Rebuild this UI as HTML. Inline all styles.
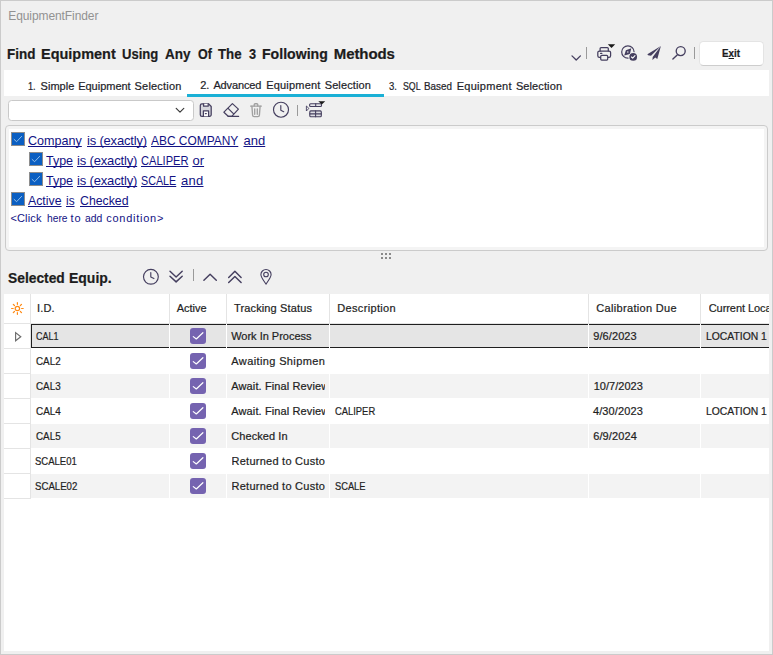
<!DOCTYPE html>
<html><head><meta charset="utf-8"><title>EquipmentFinder</title>
<style>
*{box-sizing:border-box;margin:0;padding:0}
html,body{width:773px;height:655px;overflow:hidden;background:#f0f0f0}
body{position:relative;font-family:"Liberation Sans",sans-serif;color:#2a2a2a}
.a{position:absolute}
.t{position:absolute;height:26px;line-height:0;white-space:nowrap}
.t i{display:inline-block;height:20px;width:0}
.t span{line-height:0;-webkit-text-stroke:0.22px currentColor}
svg{position:absolute;overflow:visible}
.win{left:0;top:0;width:773px;height:655px;border:1px solid #cbcbcb}
.tabbar{left:4px;top:70px;width:765px;height:26px;background:#fff}
.tabul{left:187px;top:94px;width:197px;height:2.5px;background:#1ab0d6}
.btn{left:699.2px;top:41.2px;width:64.6px;height:24.5px;background:#fff;border:1px solid #e4e4e4;border-bottom-color:#cdcdcd;border-radius:4.5px}
.combo{left:8px;top:100px;width:186px;height:21px;background:#fff;border:1px solid #c9c9c9;border-radius:3.5px}
.panel{left:5px;top:125px;width:763px;height:126px;background:#f4f4f4;border:1px solid #cbcbcb;border-radius:4px}
.panel b{position:absolute;left:3px;top:3px;right:3px;bottom:3px;background:#fff}
.cb{width:13.7px;height:13.5px;background:#0b5fc2;border:1px solid #8d8d8d}
.dot{width:2px;height:2px;background:#8a8a8a}
.sep{width:1px;background:#9a9a9a}
.grid{left:4px;top:294px;width:765px;height:357px;background:#fff;overflow:hidden}
.vl{width:1px;background:#e4e4e4}
.hl{height:1px;background:#e4e4e4}
.row{left:31px;width:738px;height:24px}
.alt{background:#f3f3f3}
.sel{background:#e5e5e5}
.wl{width:1px;background:#fff}
.chk{width:16px;height:16px;background:#7563b0;border-radius:3px}
</style></head><body>
<div class="a win"></div>
<div class="a tabbar"></div><div class="a tabul"></div>
<div class="a btn"></div>
<div class="a combo"></div>
<div class="a panel"><b></b></div>
<!-- condition checkboxes -->
<div class="a cb" style="left:11.2px;top:132.2px"></div>
<div class="a cb" style="left:29.2px;top:152.2px"></div>
<div class="a cb" style="left:29.2px;top:172.2px"></div>
<div class="a cb" style="left:11.2px;top:192.2px"></div>
<!--CBCHECKS-->
<!-- splitter dots -->
<div class="a dot" style="left:381px;top:253px"></div><div class="a dot" style="left:385px;top:253px"></div><div class="a dot" style="left:389px;top:253px"></div>
<div class="a dot" style="left:381px;top:257px"></div><div class="a dot" style="left:385px;top:257px"></div><div class="a dot" style="left:389px;top:257px"></div>
<!-- separators -->
<div class="a sep" style="left:586px;top:47px;height:12px"></div>
<div class="a sep" style="left:694px;top:47px;height:12px"></div>
<div class="a sep" style="left:297px;top:105px;height:11px"></div>
<div class="a sep" style="left:193px;top:269px;height:12px"></div>
<svg class="a" style="left:0;top:0" width="773" height="655" viewBox="0 0 773 655" fill="none" stroke="#453f5f" stroke-width="1.25" stroke-linecap="round" stroke-linejoin="round"><polyline points="572,55.9 576.2,60 580.4,55.9" stroke-width="1.3"/><path d="M600.1,51 V48.6 a1,1 0 0 1 1,-1 h6.2 a1,1 0 0 1 1,1 V51" /><rect x="597.8" y="51" width="12.8" height="6.4" rx="1.6"/><rect x="600.7" y="55.4" width="7" height="4.6" rx="1" fill="#f0f0f0"/><line x1="600.6" y1="53.4" x2="601.8" y2="53.4"/><polygon points="607.8,44.2 615.2,44.2 611.5,48" fill="#1a1a1a" stroke="none"/><circle cx="627.9" cy="52" r="6.2" stroke-width="1.2"/><polygon points="631.3,48.3 629.9,53.9 624.2,55.4 625.9,50.2" fill="#453f5f" stroke="none"/><circle cx="627.8" cy="51.9" r="0.75" fill="#f0f0f0" stroke="none"/><circle cx="633.2" cy="56.9" r="4.4" fill="#f0f0f0" stroke="#f0f0f0" stroke-width="1"/><circle cx="633.2" cy="56.9" r="3.85" fill="#453f5f" stroke="none"/><polyline points="631.5,57 632.7,58.2 635,55.7" stroke="#fff" stroke-width="1.1"/><polygon points="660.9,46.1 647.4,54.3 648,55.3 651.0,55.8" fill="#453f5f" stroke="none"/><polygon points="660.9,46.1 652.7,56.9 652.4,59.9 655.3,57.5 657.3,59" fill="#453f5f" stroke="none"/><circle cx="680.7" cy="51.1" r="4.5" stroke-width="1.35"/><line x1="677.2" y1="54.9" x2="672.9" y2="59.1" stroke-width="1.4"/><polyline points="176.2,108.4 180,112.2 183.8,108.4" stroke="#3a3a3a" stroke-width="1.2"/><path d="M201.9,103.8 h6.6 l2.7,2.7 v8.2 a1.6,1.6 0 0 1 -1.6,1.6 h-7.7 a1.6,1.6 0 0 1 -1.6,-1.6 v-9.3 a1.6,1.6 0 0 1 1.6,-1.6 z" fill="#d6d6dc"/><path d="M203.6,103.8 v2.4 h4.6 v-2.4" fill="#fff"/><path d="M203.4,116.3 v-5.4 h5.2 v5.4" fill="#fff"/><line x1="205.4" y1="113.5" x2="206.3" y2="113.5"/><path d="M232.4,103.6 L238.4,109.1 L231.8,116.3 L228.2,116.3 L223.9,112.2 Z" stroke-width="1.2"/><line x1="228.1" y1="108.4" x2="233.4" y2="113.6" stroke-width="1.2"/><line x1="228.2" y1="116.4" x2="238.6" y2="116.4" stroke-width="1.2"/><g stroke="#a0a0a0" stroke-width="1.35"><line x1="250.6" y1="106.1" x2="261.4" y2="106.1"/><path d="M254.2,106 v-1.3 a1,1 0 0 1 1,-1 h1.6 a1,1 0 0 1 1,1 v1.3"/><path d="M251.9,106.2 l0.7,9 a1.5,1.5 0 0 0 1.5,1.4 h3.8 a1.5,1.5 0 0 0 1.5,-1.4 l0.7,-9"/><line x1="254.7" y1="108.8" x2="254.7" y2="114.2"/><line x1="257.3" y1="108.8" x2="257.3" y2="114.2"/></g><circle cx="281" cy="109.7" r="7.5" stroke-width="1.15"/><polyline points="280.8,105.6 280.8,110.3 283.7,111.7" stroke-width="1.15"/><path d="M306.4,106.4 v4.6 l2.2,-2.3 z" stroke-width="0.9"/><rect x="309.6" y="103.7" width="11.9" height="2.8" rx="1" fill="#e4e4e8" stroke-width="1.1"/><line x1="315.7" y1="103.7" x2="315.7" y2="106.5" stroke-width="1.1"/><rect x="309.8" y="110.9" width="11.5" height="5.8" rx="1" fill="#dcdce2" stroke-width="1.1"/><line x1="315.6" y1="110.9" x2="315.6" y2="116.7" stroke-width="1.1"/><line x1="309.8" y1="113.9" x2="321.3" y2="113.9" stroke-width="1.1"/><polygon points="318.3,101.2 325.2,101.2 321.8,104.4" fill="#1a1a1a" stroke="none"/><circle cx="150.9" cy="276.8" r="7.4" stroke-width="1.15"/><polyline points="150.8,272.6 150.8,277.1 153.9,278.6" stroke-width="1.15"/><polyline points="170,271.3 176.1,277 182.2,271.3" stroke-width="1.45"/><polyline points="170,276.2 176.1,281.9 182.2,276.2" stroke-width="1.45"/><polyline points="203.9,280.3 210.1,274.2 216.3,280.3" stroke-width="1.45"/><polyline points="228.7,277.4 234.9,271.2 241.1,277.4" stroke-width="1.45"/><polyline points="228.7,282.6 234.9,276.4 241.1,282.6" stroke-width="1.45"/><path d="M266,284.1 C263,279.6 260.9,277.3 260.9,274.6 a5.1,5.1 0 0 1 10.2,0 C271.1,277.3 269,279.6 266,284.1 z" stroke-width="1.1"/><circle cx="266" cy="274.5" r="2.3" stroke-width="1.1"/><polyline points="14.1,139.4 16.6,141.7 21.6,136.4" stroke="#a9cdf0" stroke-width="0.85"/><polyline points="32.1,159.4 34.6,161.7 39.6,156.4" stroke="#a9cdf0" stroke-width="0.85"/><polyline points="32.1,179.4 34.6,181.7 39.6,176.4" stroke="#a9cdf0" stroke-width="0.85"/><polyline points="14.1,199.4 16.6,201.7 21.6,196.4" stroke="#a9cdf0" stroke-width="0.85"/></svg>
<!-- grid -->
<div class="a" style="left:4px;top:294px;width:765px;height:357px;background:#fff"></div>
<div class="a vl" style="left:30px;top:294px;height:29px"></div>
<div class="a vl" style="left:169px;top:294px;height:29px"></div>
<div class="a vl" style="left:226px;top:294px;height:29px"></div>
<div class="a vl" style="left:329px;top:294px;height:29px"></div>
<div class="a vl" style="left:588px;top:294px;height:29px"></div>
<div class="a vl" style="left:700px;top:294px;height:29px"></div>
<div class="a hl" style="left:4px;top:323px;width:765px"></div>
<div class="a vl" style="left:30px;top:323px;height:176px"></div>
<div class="a row sel" style="top:324px"></div>
<div class="a hl" style="left:4px;top:348px;width:26px"></div>
<div class="a hl" style="left:4px;top:373px;width:26px"></div>
<div class="a row alt" style="top:374px"></div>
<div class="a hl" style="left:4px;top:398px;width:26px"></div>
<div class="a hl" style="left:4px;top:423px;width:26px"></div>
<div class="a row alt" style="top:424px"></div>
<div class="a hl" style="left:4px;top:448px;width:26px"></div>
<div class="a hl" style="left:4px;top:473px;width:26px"></div>
<div class="a row alt" style="top:474px"></div>
<div class="a hl" style="left:4px;top:498px;width:26px"></div>
<div class="a" style="left:31px;top:324px;width:738px;height:1px;background:#1f1f1f"></div>
<div class="a" style="left:31px;top:347px;width:738px;height:1px;background:#1f1f1f"></div>
<div class="a" style="left:31px;top:324px;width:1px;height:24px;background:#1f1f1f"></div>
<div class="a wl" style="left:169px;top:324px;height:175px"></div>
<div class="a wl" style="left:226px;top:324px;height:175px"></div>
<div class="a wl" style="left:329px;top:324px;height:175px"></div>
<div class="a wl" style="left:588px;top:324px;height:175px"></div>
<div class="a wl" style="left:700px;top:324px;height:175px"></div>
<div class="a chk" style="left:190px;top:328px"></div>
<div class="a chk" style="left:190px;top:353px"></div>
<div class="a chk" style="left:190px;top:378px"></div>
<div class="a chk" style="left:190px;top:403px"></div>
<div class="a chk" style="left:190px;top:428px"></div>
<div class="a chk" style="left:190px;top:453px"></div>
<div class="a chk" style="left:190px;top:478px"></div>
<svg class="a" style="left:0;top:0" width="773" height="655" viewBox="0 0 773 655" fill="none" stroke="#453f5f" stroke-width="1.25" stroke-linecap="round" stroke-linejoin="round"><polyline points="193.3,336.6 196.3,339 202.9,332.7" stroke="#fff" stroke-width="1.2"/><polyline points="193.3,361.6 196.3,364 202.9,357.7" stroke="#fff" stroke-width="1.2"/><polyline points="193.3,386.6 196.3,389 202.9,382.7" stroke="#fff" stroke-width="1.2"/><polyline points="193.3,411.6 196.3,414 202.9,407.7" stroke="#fff" stroke-width="1.2"/><polyline points="193.3,436.6 196.3,439 202.9,432.7" stroke="#fff" stroke-width="1.2"/><polyline points="193.3,461.6 196.3,464 202.9,457.7" stroke="#fff" stroke-width="1.2"/><polyline points="193.3,486.6 196.3,489 202.9,482.7" stroke="#fff" stroke-width="1.2"/><circle cx="17.4" cy="308.5" r="2.2" stroke="#ff8a14" stroke-width="1.2"/><line x1="21.60" y1="308.50" x2="23.20" y2="308.50" stroke="#ff8a14" stroke-width="1.2"/><line x1="20.37" y1="311.47" x2="21.50" y2="312.60" stroke="#ff8a14" stroke-width="1.2"/><line x1="17.40" y1="312.70" x2="17.40" y2="314.30" stroke="#ff8a14" stroke-width="1.2"/><line x1="14.43" y1="311.47" x2="13.30" y2="312.60" stroke="#ff8a14" stroke-width="1.2"/><line x1="13.20" y1="308.50" x2="11.60" y2="308.50" stroke="#ff8a14" stroke-width="1.2"/><line x1="14.43" y1="305.53" x2="13.30" y2="304.40" stroke="#ff8a14" stroke-width="1.2"/><line x1="17.40" y1="304.30" x2="17.40" y2="302.70" stroke="#ff8a14" stroke-width="1.2"/><line x1="20.37" y1="305.53" x2="21.50" y2="304.40" stroke="#ff8a14" stroke-width="1.2"/><path d="M15.6,332.6 V340.8 L20.8,336.7 Z" stroke="#6c6c6c" stroke-width="1.15" stroke-linejoin="miter"/></svg>
<div class="t" style="left:8.30px;top:0px;"><i></i><span style="font-size:12px;color:#929292;letter-spacing:-0.092px;-webkit-text-stroke:0;">EquipmentFinder</span></div>
<div class="t" style="left:6.90px;top:39px;"><i></i><span style="font-size:15px;color:#1c1c1c;display:inline-block;transform:scaleX(0.8986);transform-origin:0 100%;font-weight:700;">Find</span></div>
<div class="t" style="left:40.94px;top:39px;"><i></i><span style="font-size:15px;color:#1c1c1c;display:inline-block;transform:scaleX(0.9647);transform-origin:0 100%;font-weight:700;">Equipment</span></div>
<div class="t" style="left:122.10px;top:39px;"><i></i><span style="font-size:15px;color:#1c1c1c;display:inline-block;transform:scaleX(0.8722);transform-origin:0 100%;font-weight:700;">Using</span></div>
<div class="t" style="left:164.80px;top:39px;"><i></i><span style="font-size:15px;color:#1c1c1c;display:inline-block;transform:scaleX(0.9002);transform-origin:0 100%;font-weight:700;">Any</span></div>
<div class="t" style="left:197.60px;top:39px;"><i></i><span style="font-size:15px;color:#1c1c1c;display:inline-block;transform:scaleX(0.8320);transform-origin:0 100%;font-weight:700;">Of</span></div>
<div class="t" style="left:218.30px;top:39px;"><i></i><span style="font-size:15px;color:#1c1c1c;display:inline-block;transform:scaleX(0.8851);transform-origin:0 100%;font-weight:700;">The</span></div>
<div class="t" style="left:249.20px;top:39px;"><i></i><span style="font-size:15px;color:#1c1c1c;display:inline-block;transform:scaleX(0.8500);transform-origin:0 100%;font-weight:700;">3</span></div>
<div class="t" style="left:262.36px;top:39px;"><i></i><span style="font-size:15px;color:#1c1c1c;display:inline-block;transform:scaleX(0.9401);transform-origin:0 100%;font-weight:700;">Following</span></div>
<div class="t" style="left:333.80px;top:39px;"><i></i><span style="font-size:15px;color:#1c1c1c;letter-spacing:-0.087px;font-weight:700;">Methods</span></div>
<div class="t" style="left:721.90px;top:37px;"><i></i><span style="font-size:11px;color:#1c1c1c;display:inline-block;transform:scaleX(0.8922);transform-origin:0 100%;font-weight:700;">E<u>x</u>it</span></div>
<div class="t" style="left:28.20px;top:70px;"><i></i><span style="font-size:11px;color:#1f1f2b;display:inline-block;transform:scaleX(0.8335);transform-origin:0 100%;">1.</span></div>
<div class="t" style="left:40.50px;top:70px;"><i></i><span style="font-size:11px;color:#1f1f2b;letter-spacing:0.059px;">Simple</span></div>
<div class="t" style="left:78.20px;top:70px;"><i></i><span style="font-size:11px;color:#1f1f2b;letter-spacing:-0.017px;">Equipment</span></div>
<div class="t" style="left:134.60px;top:70px;"><i></i><span style="font-size:11px;color:#1f1f2b;letter-spacing:0.183px;">Selection</span></div>
<div class="t" style="left:200.30px;top:69px;"><i></i><span style="font-size:11px;color:#1f1f2b;letter-spacing:-0.218px;">2.</span></div>
<div class="t" style="left:213.40px;top:69px;"><i></i><span style="font-size:11px;color:#1f1f2b;letter-spacing:-0.130px;">Advanced</span></div>
<div class="t" style="left:266.20px;top:69px;"><i></i><span style="font-size:11px;color:#1f1f2b;letter-spacing:0.196px;">Equipment</span></div>
<div class="t" style="left:324.70px;top:69px;"><i></i><span style="font-size:11px;color:#1f1f2b;letter-spacing:0.108px;">Selection</span></div>
<div class="t" style="left:389.30px;top:70px;"><i></i><span style="font-size:11px;color:#1f1f2b;display:inline-block;transform:scaleX(0.8664);transform-origin:0 100%;">3.</span></div>
<div class="t" style="left:402.60px;top:70px;"><i></i><span style="font-size:11px;color:#1f1f2b;display:inline-block;transform:scaleX(0.7993);transform-origin:0 100%;">SQL</span></div>
<div class="t" style="left:424.20px;top:70px;"><i></i><span style="font-size:11px;color:#1f1f2b;display:inline-block;transform:scaleX(0.8947);transform-origin:0 100%;">Based</span></div>
<div class="t" style="left:456.70px;top:70px;"><i></i><span style="font-size:11px;color:#1f1f2b;letter-spacing:0.283px;">Equipment</span></div>
<div class="t" style="left:515.90px;top:70px;"><i></i><span style="font-size:11px;color:#1f1f2b;letter-spacing:0.108px;">Selection</span></div>
<div class="t" style="left:28.30px;top:125px;"><i></i><span style="font-size:13px;color:#121284;display:inline-block;transform:scaleX(0.9673);transform-origin:0 100%;text-decoration:underline;text-underline-offset:1px;text-decoration-thickness:1px;text-decoration-skip-ink:none;-webkit-text-stroke:0;">Company</span></div>
<div class="t" style="left:87.00px;top:125px;"><i></i><span style="font-size:13px;color:#121284;letter-spacing:-0.190px;text-decoration:underline;text-underline-offset:1px;text-decoration-thickness:1px;text-decoration-skip-ink:none;-webkit-text-stroke:0;">is (exactly)</span></div>
<div class="t" style="left:151.40px;top:125px;"><i></i><span style="font-size:13px;color:#121284;display:inline-block;transform:scaleX(0.9179);transform-origin:0 100%;text-decoration:underline;text-underline-offset:1px;text-decoration-thickness:1px;text-decoration-skip-ink:none;-webkit-text-stroke:0;">ABC COMPANY</span></div>
<div class="t" style="left:243.50px;top:125px;"><i></i><span style="font-size:13px;color:#121284;letter-spacing:0.020px;text-decoration:underline;text-underline-offset:1px;text-decoration-thickness:1px;text-decoration-skip-ink:none;-webkit-text-stroke:0;">and</span></div>
<div class="t" style="left:46.40px;top:145px;"><i></i><span style="font-size:13px;color:#121284;display:inline-block;transform:scaleX(0.9587);transform-origin:0 100%;text-decoration:underline;text-underline-offset:1px;text-decoration-thickness:1px;text-decoration-skip-ink:none;-webkit-text-stroke:0;">Type</span></div>
<div class="t" style="left:77.00px;top:145px;"><i></i><span style="font-size:13px;color:#121284;letter-spacing:-0.163px;text-decoration:underline;text-underline-offset:1px;text-decoration-thickness:1px;text-decoration-skip-ink:none;-webkit-text-stroke:0;">is (exactly)</span></div>
<div class="t" style="left:141.30px;top:145px;"><i></i><span style="font-size:13px;color:#121284;display:inline-block;transform:scaleX(0.8526);transform-origin:0 100%;text-decoration:underline;text-underline-offset:1px;text-decoration-thickness:1px;text-decoration-skip-ink:none;-webkit-text-stroke:0;">CALIPER</span></div>
<div class="t" style="left:192.40px;top:145px;"><i></i><span style="font-size:13px;color:#121284;letter-spacing:0.070px;text-decoration:underline;text-underline-offset:1px;text-decoration-thickness:1px;text-decoration-skip-ink:none;-webkit-text-stroke:0;">or</span></div>
<div class="t" style="left:46.40px;top:165px;"><i></i><span style="font-size:13px;color:#121284;display:inline-block;transform:scaleX(0.9587);transform-origin:0 100%;text-decoration:underline;text-underline-offset:1px;text-decoration-thickness:1px;text-decoration-skip-ink:none;-webkit-text-stroke:0;">Type</span></div>
<div class="t" style="left:77.00px;top:165px;"><i></i><span style="font-size:13px;color:#121284;letter-spacing:-0.163px;text-decoration:underline;text-underline-offset:1px;text-decoration-thickness:1px;text-decoration-skip-ink:none;-webkit-text-stroke:0;">is (exactly)</span></div>
<div class="t" style="left:141.30px;top:165px;"><i></i><span style="font-size:13px;color:#121284;display:inline-block;transform:scaleX(0.8264);transform-origin:0 100%;text-decoration:underline;text-underline-offset:1px;text-decoration-thickness:1px;text-decoration-skip-ink:none;-webkit-text-stroke:0;">SCALE</span></div>
<div class="t" style="left:181.00px;top:165px;"><i></i><span style="font-size:13px;color:#121284;letter-spacing:0.270px;text-decoration:underline;text-underline-offset:1px;text-decoration-thickness:1px;text-decoration-skip-ink:none;-webkit-text-stroke:0;">and</span></div>
<div class="t" style="left:28.30px;top:185px;"><i></i><span style="font-size:13px;color:#121284;display:inline-block;transform:scaleX(0.9468);transform-origin:0 100%;text-decoration:underline;text-underline-offset:1px;text-decoration-thickness:1px;text-decoration-skip-ink:none;-webkit-text-stroke:0;">Active</span></div>
<div class="t" style="left:66.00px;top:185px;"><i></i><span style="font-size:13px;color:#121284;display:inline-block;transform:scaleX(0.9102);transform-origin:0 100%;text-decoration:underline;text-underline-offset:1px;text-decoration-thickness:1px;text-decoration-skip-ink:none;-webkit-text-stroke:0;">is</span></div>
<div class="t" style="left:79.70px;top:185px;"><i></i><span style="font-size:13px;color:#121284;display:inline-block;transform:scaleX(0.9456);transform-origin:0 100%;text-decoration:underline;text-underline-offset:1px;text-decoration-thickness:1px;text-decoration-skip-ink:none;-webkit-text-stroke:0;">Checked</span></div>
<div class="t" style="left:10.40px;top:202px;"><i></i><span style="font-size:11px;color:#121284;letter-spacing:0.149px;-webkit-text-stroke:0;">&lt;Click</span></div>
<div class="t" style="left:46.80px;top:202px;"><i></i><span style="font-size:11px;color:#121284;display:inline-block;transform:scaleX(0.9316);transform-origin:0 100%;-webkit-text-stroke:0;">here</span></div>
<div class="t" style="left:70.50px;top:202px;"><i></i><span style="font-size:11px;color:#121284;letter-spacing:0.844px;-webkit-text-stroke:0;">to</span></div>
<div class="t" style="left:84.60px;top:202px;"><i></i><span style="font-size:11px;color:#121284;display:inline-block;transform:scaleX(0.9432);transform-origin:0 100%;-webkit-text-stroke:0;">add</span></div>
<div class="t" style="left:106.20px;top:202px;"><i></i><span style="font-size:11px;color:#121284;letter-spacing:0.741px;-webkit-text-stroke:0;">condition&gt;</span></div>
<div class="t" style="left:7.50px;top:263px;"><i></i><span style="font-size:15px;color:#1c1c1c;display:inline-block;transform:scaleX(0.9198);transform-origin:0 100%;font-weight:700;">Selected</span></div>
<div class="t" style="left:68.97px;top:263px;"><i></i><span style="font-size:15px;color:#1c1c1c;display:inline-block;transform:scaleX(0.9315);transform-origin:0 100%;font-weight:700;">Equip.</span></div>
<div class="t" style="left:37.00px;top:292px;"><i></i><span style="font-size:11px;color:#1f1f1f;letter-spacing:0.148px;">I.D.</span></div>
<div class="t" style="left:176.80px;top:292px;"><i></i><span style="font-size:11px;color:#1f1f1f;letter-spacing:-0.047px;">Active</span></div>
<div class="t" style="left:234.00px;top:292px;"><i></i><span style="font-size:11px;color:#1f1f1f;letter-spacing:0.135px;">Tracking Status</span></div>
<div class="t" style="left:337.30px;top:292px;"><i></i><span style="font-size:11px;color:#1f1f1f;letter-spacing:0.330px;">Description</span></div>
<div class="t" style="left:596.30px;top:292px;"><i></i><span style="font-size:11px;color:#1f1f1f;letter-spacing:0.321px;">Calibration Due</span></div>
<div class="t" style="left:708.70px;top:292px;width:60.30px;overflow:hidden;"><i></i><span style="font-size:11px;color:#1f1f1f;letter-spacing:-0.057px;">Current Location</span></div>
<div class="t" style="left:35.70px;top:320px;"><i></i><span style="font-size:11px;color:#1f1f1f;display:inline-block;transform:scaleX(0.8176);transform-origin:0 100%;">CAL1</span></div>
<div class="t" style="left:35.50px;top:345px;"><i></i><span style="font-size:11px;color:#1f1f1f;display:inline-block;transform:scaleX(0.8942);transform-origin:0 100%;">CAL2</span></div>
<div class="t" style="left:35.50px;top:370px;"><i></i><span style="font-size:11px;color:#1f1f1f;display:inline-block;transform:scaleX(0.8942);transform-origin:0 100%;">CAL3</span></div>
<div class="t" style="left:35.50px;top:395px;"><i></i><span style="font-size:11px;color:#1f1f1f;display:inline-block;transform:scaleX(0.9015);transform-origin:0 100%;">CAL4</span></div>
<div class="t" style="left:35.50px;top:420px;"><i></i><span style="font-size:11px;color:#1f1f1f;display:inline-block;transform:scaleX(0.8942);transform-origin:0 100%;">CAL5</span></div>
<div class="t" style="left:35.40px;top:445px;"><i></i><span style="font-size:11px;color:#1f1f1f;display:inline-block;transform:scaleX(0.8653);transform-origin:0 100%;">SCALE01</span></div>
<div class="t" style="left:35.40px;top:470px;"><i></i><span style="font-size:11px;color:#1f1f1f;display:inline-block;transform:scaleX(0.8757);transform-origin:0 100%;">SCALE02</span></div>
<div class="t" style="left:231.20px;top:320px;"><i></i><span style="font-size:11px;color:#1f1f1f;letter-spacing:-0.013px;">Work In Process</span></div>
<div class="t" style="left:231.30px;top:345px;width:93.90px;overflow:hidden;"><i></i><span style="font-size:11px;color:#1f1f1f;letter-spacing:0.378px;">Awaiting Shipment</span></div>
<div class="t" style="left:231.30px;top:370px;width:93.90px;overflow:hidden;"><i></i><span style="font-size:11px;color:#1f1f1f;letter-spacing:0.117px;">Await. Final Review</span></div>
<div class="t" style="left:231.30px;top:395px;width:93.90px;overflow:hidden;"><i></i><span style="font-size:11px;color:#1f1f1f;letter-spacing:0.117px;">Await. Final Review</span></div>
<div class="t" style="left:231.30px;top:420px;"><i></i><span style="font-size:11px;color:#1f1f1f;letter-spacing:0.064px;">Checked In</span></div>
<div class="t" style="left:231.50px;top:445px;width:93.70px;overflow:hidden;"><i></i><span style="font-size:11px;color:#1f1f1f;letter-spacing:0.253px;">Returned to Customer</span></div>
<div class="t" style="left:231.50px;top:470px;width:93.70px;overflow:hidden;"><i></i><span style="font-size:11px;color:#1f1f1f;letter-spacing:0.253px;">Returned to Customer</span></div>
<div class="t" style="left:334.50px;top:395px;"><i></i><span style="font-size:11px;color:#1f1f1f;display:inline-block;transform:scaleX(0.8530);transform-origin:0 100%;">CALIPER</span></div>
<div class="t" style="left:334.50px;top:470px;"><i></i><span style="font-size:11px;color:#1f1f1f;display:inline-block;transform:scaleX(0.8451);transform-origin:0 100%;">SCALE</span></div>
<div class="t" style="left:593.20px;top:320px;"><i></i><span style="font-size:11px;color:#1f1f1f;letter-spacing:0.100px;">9/6/2023</span></div>
<div class="t" style="left:593.70px;top:370px;"><i></i><span style="font-size:11px;color:#1f1f1f;letter-spacing:0.023px;">10/7/2023</span></div>
<div class="t" style="left:592.90px;top:395px;"><i></i><span style="font-size:11px;color:#1f1f1f;letter-spacing:0.123px;">4/30/2023</span></div>
<div class="t" style="left:593.20px;top:420px;"><i></i><span style="font-size:11px;color:#1f1f1f;letter-spacing:0.128px;">6/9/2024</span></div>
<div class="t" style="left:705.90px;top:320px;width:63.10px;overflow:hidden;"><i></i><span style="font-size:11px;color:#1f1f1f;display:inline-block;transform:scaleX(0.9415);transform-origin:0 100%;">LOCATION 1</span></div>
<div class="t" style="left:705.90px;top:395px;width:63.10px;overflow:hidden;"><i></i><span style="font-size:11px;color:#1f1f1f;display:inline-block;transform:scaleX(0.9415);transform-origin:0 100%;">LOCATION 1</span></div>
</body></html>
